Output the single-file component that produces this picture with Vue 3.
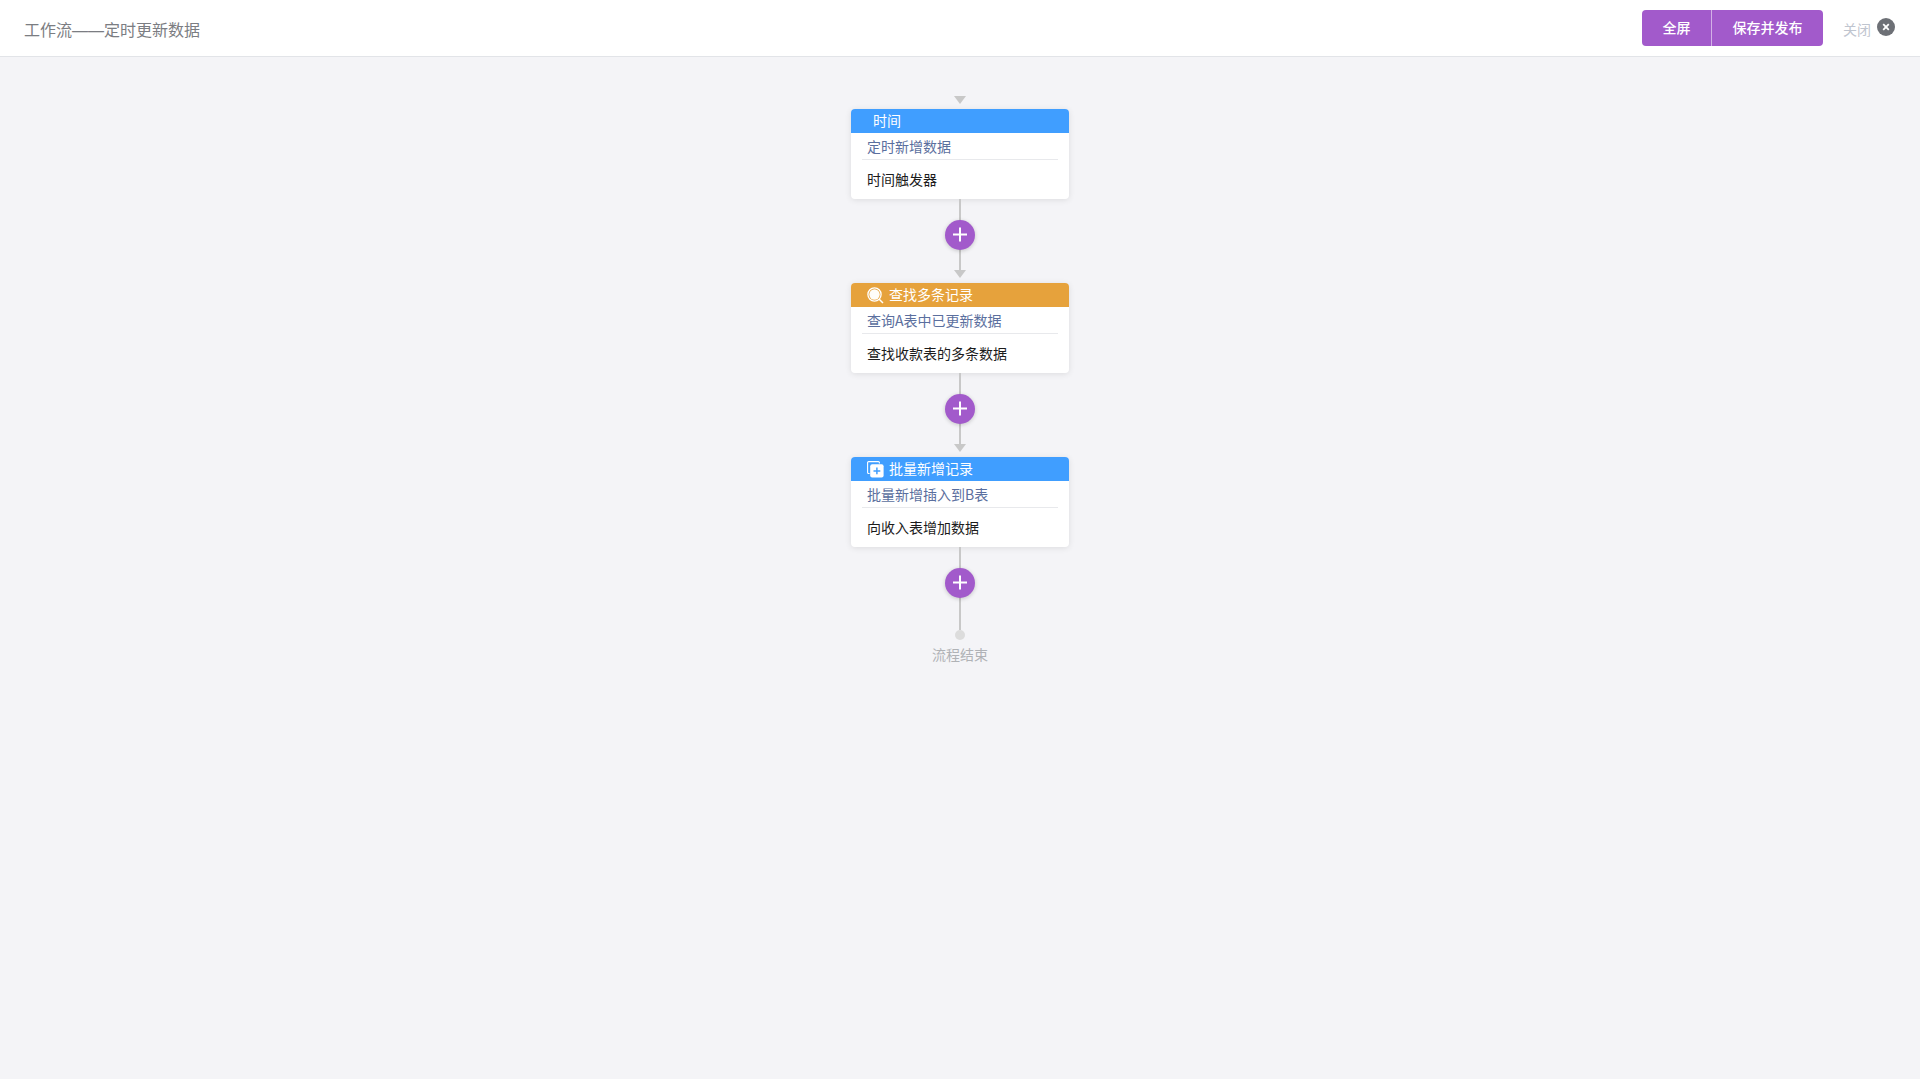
<script setup>
const nodes = [
  { title: '时间', name: '定时新增数据', desc: '时间触发器', color: 'blue', icon: '' },
  { title: '查找多条记录', name: '查询A表中已更新数据', desc: '查找收款表的多条数据', color: 'orange', icon: 'search' },
  { title: '批量新增记录', name: '批量新增插入到B表', desc: '向收入表增加数据', color: 'blue', icon: 'add' }
]
</script>

<template>
  <div class="page">
    <header class="topbar">
      <div class="title">工作流——定时更新数据</div>
      <div class="actions">
        <div class="btn-group">
          <button class="btn btn-full">全屏</button>
          <button class="btn btn-save">保存并发布</button>
        </div>
        <div class="close">
          <span class="close-text">关闭</span>
          <svg class="close-icon" width="18" height="18" viewBox="0 0 18 18">
            <circle cx="9" cy="9" r="9" fill="#6d7076" />
            <path d="M6.2 6.2l5.6 5.6M11.8 6.2l-5.6 5.6" stroke="#fff" stroke-width="1.8" fill="none" />
          </svg>
        </div>
      </div>
    </header>
    <main class="flow">
      <div class="arrow first"></div>
      <template v-for="(n, i) in nodes" :key="i">
        <section class="card">
          <div class="card-head" :class="n.color">
            <svg v-if="n.icon === 'search'" class="head-icon" width="17" height="17" viewBox="0 0 17 17">
              <circle cx="7.5" cy="7.5" r="6.6" fill="none" stroke="#fff" stroke-width="1.3" />
              <circle cx="7.5" cy="7.5" r="5.2" fill="#fffdf9" />
              <path d="M12.2 12.2l3.8 3.8" stroke="#fff" stroke-width="1.5" fill="none" />
            </svg>
            <svg v-else-if="n.icon === 'add'" class="head-icon" width="17" height="17" viewBox="0 0 17 17">
              <path d="M2.6 12.5H1.6a1 1 0 0 1-1-1V1.6a1 1 0 0 1 1-1h9.8a1 1 0 0 1 1 1V2.6" stroke="#fff" stroke-width="1.1" fill="none" />
              <rect x="3.2" y="3.2" width="13.4" height="13.4" rx="2" fill="#fff" />
              <path d="M9.9 6.5v6.8M6.5 9.9h6.8" stroke="#409eff" stroke-width="1.5" fill="none" />
            </svg>
            <span class="head-text" :class="{ 'no-icon': !n.icon }">{{ n.title }}</span>
          </div>
          <div class="card-name">{{ n.name }}</div>
          <div class="card-desc">{{ n.desc }}</div>
        </section>
        <div class="connector" :class="{ last: i === nodes.length - 1 }">
          <button class="plus">
            <svg width="16" height="16" viewBox="0 0 16 16">
              <path d="M8 .5v14M1 7.5h14" stroke="#fff" stroke-width="2" fill="none" />
            </svg>
          </button>
          <div v-if="i < nodes.length - 1" class="arrow"></div>
        </div>
      </template>
      <div class="end-dot"></div>
      <div class="end-text">流程结束</div>
    </main>
  </div>
</template>

<style>
html, body { margin: 0; background: #f4f4f7; }
</style>

<style scoped>
.page {
  min-height: 1079px;
  background: #f4f4f7;
  font-family: "Noto Sans CJK SC", "Liberation Sans", sans-serif;
  font-size: 14px;
}
.topbar {
  height: 56px;
  background: #fff;
  border-bottom: 1px solid #e2e4e8;
  display: flex;
  justify-content: space-between;
  align-items: center;
  padding: 0 25px 0 24px;
}
.title {
  font-family: "Liberation Sans", "Noto Sans CJK SC", sans-serif;
  font-size: 16px;
  color: #7b7d82;
  line-height: 24px;
  padding-top: 5px;
}
.actions { display: flex; align-items: center; gap: 20px; }
.btn-group { display: flex; height: 36px; border-radius: 4px; overflow: hidden; }
.btn {
  border: 0;
  padding: 0 0 2px;
  background: #a25acb;
  color: #fff;
  font: 500 14px "Noto Sans CJK SC", sans-serif;
}
.btn-full { width: 70px; border-right: 1px solid #d3b1e6; }
.btn-save { width: 111px; }
.close { display: flex; align-items: flex-start; gap: 6px; }
.close-text { color: #bfc5cf; font-size: 14px; line-height: 20px; margin-top: 2px; }
.close-icon { margin-top: 1px; }
.flow { display: flex; flex-direction: column; align-items: center; padding-top: 39px; }
.arrow {
  width: 0;
  height: 0;
  border-left: 6px solid transparent;
  border-right: 6px solid transparent;
  border-top: 8px solid #c8c8c8;
}
.arrow.first { margin-bottom: 5px; }
.card {
  width: 218px;
  height: 90px;
  background: #fff;
  border-radius: 4px;
  box-shadow: 0 1px 6px rgba(0, 0, 0, .1);
  overflow: hidden;
}
.card-head {
  height: 24px;
  display: flex;
  align-items: center;
  padding-left: 16px;
  color: #fff;
  font-size: 14px;
}
.card-head.blue { background: #409eff; }
.card-head.orange { background: #e6a23c; }
.head-icon { flex: none; margin-right: 5px; }
.head-text { align-self: flex-start; line-height: 22px; }
.head-text.no-icon { margin-left: 6px; }
.card-name {
  margin: 0 11px;
  padding-left: 5px;
  height: 27px;
  line-height: 27px;
  color: #5b6f9e;
  border-bottom: 1px solid #e8e9ec;
  box-sizing: border-box;
}
.card-desc { padding-left: 16px; line-height: 38px; color: #1c1c1c; height: 39px; }
.connector {
  width: 218px;
  height: 84px;
  display: flex;
  flex-direction: column;
  align-items: center;
  background: linear-gradient(#c8c8c8, #c8c8c8) center top / 2px 71px no-repeat;
  padding-top: 21px;
  box-sizing: border-box;
}
.connector.last { height: 83px; background-size: 2px 83px; }
.plus {
  width: 30px;
  height: 30px;
  padding: 0;
  border: 0;
  border-radius: 50%;
  background: #a25acb;
  box-shadow: 0 1px 4px rgba(0, 0, 0, .2);
  display: flex;
  align-items: center;
  justify-content: center;
  flex: none;
}
.connector .arrow { margin-top: 20px; }
.end-dot { width: 10px; height: 10px; border-radius: 50%; background: #dcdcdc; }
.end-text { margin-top: 4px; color: #b0b2b6; font-size: 14px; line-height: 20px; }
</style>
